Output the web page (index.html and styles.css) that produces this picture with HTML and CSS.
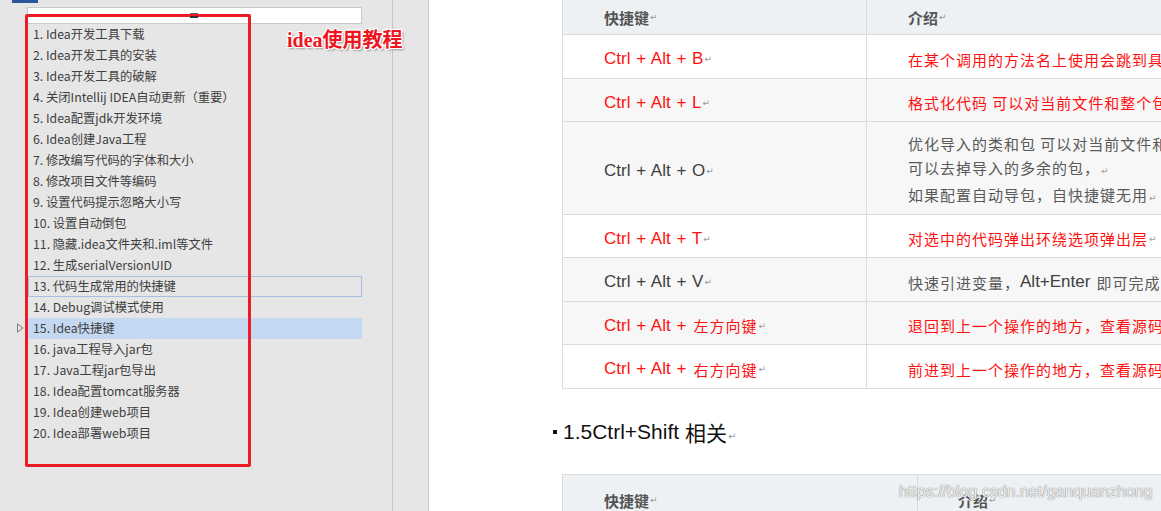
FILE: index.html
```html
<!DOCTYPE html>
<html lang="zh-CN">
<head>
<meta charset="utf-8">
<title>Idea快捷键</title>
<link rel="stylesheet" href="styles.css">
</head>
<body>
<div class="app">
  <aside class="nav">
    <div class="ribbon-tab"></div>
    <div class="search">
      <svg class="grip" width="8" height="6" viewBox="0 0 8 6"><rect x="0" y="0" width="8" height="1" fill="#666"/><rect x="0" y="3" width="8" height="2" fill="#333"/></svg>
    </div>
    <ul class="outline">
      <li>1. Idea开发工具下载</li>
      <li>2. Idea开发工具的安装</li>
      <li>3. Idea开发工具的破解</li>
      <li>4. 关闭Intellij IDEA自动更新（重要）</li>
      <li>5. Idea配置jdk开发环境</li>
      <li>6. Idea创建Java工程</li>
      <li>7. 修改编写代码的字体和大小</li>
      <li>8. 修改项目文件等编码</li>
      <li>9. 设置代码提示忽略大小写</li>
      <li>10. 设置自动倒包</li>
      <li>11. 隐藏.idea文件夹和.iml等文件</li>
      <li>12. 生成serialVersionUID</li>
      <li class="hover">13. 代码生成常用的快捷键</li>
      <li>14. Debug调试模式使用</li>
      <li class="current"><svg class="caret" width="7" height="10" viewBox="0 0 7 10"><path d="M0.5 0.8 L6 5 L0.5 9.2 Z" fill="none" stroke="#777" stroke-width="1"/></svg>15. Idea快捷键</li>
      <li>16. java工程导入jar包</li>
      <li>17. Java工程jar包导出</li>
      <li>18. Idea配置tomcat服务器</li>
      <li>19. Idea创建web项目</li>
      <li>20. Idea部署web项目</li>
    </ul>
    <div class="annot-box"></div>
    <div class="annot-label">idea使用教程</div>
  </aside>
  <div class="gutter"></div>
  <main class="doc">
    <div class="sheet">
      <div class="table t1">
        <div class="row head">
          <div class="cell k">快捷键<span class="ret">↵</span></div>
          <div class="cell d">介绍<span class="ret">↵</span></div>
        </div>
        <div class="row r44 red">
          <div class="cell k">Ctrl + Alt + B<span class="ret">↵</span></div>
          <div class="cell d">在某个调用的方法名上使用会跳到具体的实现处，可以跳过接口</div>
        </div>
        <div class="row r43 grey red">
          <div class="cell k">Ctrl + Alt + L<span class="ret">↵</span></div>
          <div class="cell d">格式化代码 可以对当前文件和整个包目录使用</div>
        </div>
        <div class="row tall grey">
          <div class="cell k">Ctrl + Alt + O<span class="ret">↵</span></div>
          <div class="cell d multi">
            <span>优化导入的类和包 可以对当前文件和整个包目录使用</span>
            <span>可以去掉导入的多余的包，<span class="ret">↵</span></span>
            <span>如果配置自动导包，自快捷键无用<span class="ret">↵</span></span>
          </div>
        </div>
        <div class="row r43 red">
          <div class="cell k">Ctrl + Alt + T<span class="ret">↵</span></div>
          <div class="cell d">对选中的代码弹出环绕选项弹出层<span class="ret">↵</span></div>
        </div>
        <div class="row r44 grey">
          <div class="cell k">Ctrl + Alt + V<span class="ret">↵</span></div>
          <div class="cell d">快速引进变量，<span class="latin">Alt+Enter</span>即可完成，</div>
        </div>
        <div class="row r43 grey red">
          <div class="cell k">Ctrl + Alt +<span class="cjk">左方向键</span><span class="ret">↵</span></div>
          <div class="cell d">退回到上一个操作的地方，查看源码的时候很方便</div>
        </div>
        <div class="row r44 red">
          <div class="cell k">Ctrl + Alt +<span class="cjk">右方向键</span><span class="ret">↵</span></div>
          <div class="cell d">前进到上一个操作的地方，查看源码的时候很方便</div>
        </div>
      </div>

      <h2 class="section"><span class="bullet"></span>1.5Ctrl+Shift <span class="cjk-h">相关</span><span class="ret">↵</span></h2>

      <div class="table t2">
        <div class="row head2">
          <div class="cell k">快捷键<span class="ret">↵</span></div>
          <div class="cell d">介绍<span class="ret">↵</span></div>
        </div>
      </div>
    </div>
    <div class="watermark">https://blog.csdn.net/ganquanzhong</div>
  </main>
</div>
</body>
</html>
```

FILE: styles.css
```css
* { box-sizing: border-box; }
html, body { margin: 0; padding: 0; }
body {
  width: 1161px;
  height: 511px;
  overflow: hidden;
  font-family: "Noto Sans CJK SC", "Liberation Sans", sans-serif;
}
.app {
  display: flex;
  height: 511px;
}

/* ---------- navigation pane ---------- */
.nav {
  position: relative;
  width: 393px;
  flex: none;
  background: #e6e6e6;
  border-right: 1px solid #c6c6c6;
}
.ribbon-tab {
  width: 26px;
  height: 3px;
  margin-left: 12px;
  background: #2b579a;
}
.search {
  margin: 4px 0 0 27px;
  width: 335px;
  height: 17px;
  background: #fff;
  border: 1px solid #c8c8c8;
  display: flex;
  justify-content: center;
  align-items: flex-start;
  padding-top: 5px;
}
.grip {
  display: block;
  margin-left: -2px;
  position: relative;
  z-index: 2;
}
.outline {
  list-style: none;
  margin: 0 0 0 28px;
  padding: 0;
  width: 334px;
}
.outline li {
  position: relative;
  height: 21px;
  line-height: 21px;
  padding-left: 5px;
  font-size: 12.3px;
  color: #404040;
  white-space: nowrap;
}
.outline li.hover {
  border: 1px solid #a7c0e2;
  padding-left: 4px;
  line-height: 19px;
}
.outline li.current { background: #c5d8f2; }
.caret {
  position: absolute;
  left: -11px;
  top: 5px;
}
.annot-box {
  position: absolute;
  z-index: 1;
  left: 25px;
  top: 14px;
  width: 226px;
  height: 453px;
  border: 3px solid #ec1c24;
  border-radius: 2px;
}
.annot-label {
  position: absolute;
  left: 287px;
  top: 27px;
  white-space: nowrap;
  font-family: "Liberation Serif", "Noto Sans CJK SC", serif;
  font-weight: bold;
  font-size: 20px;
  line-height: 26px;
  color: #f0141e;
  text-shadow: 1px 0 0 #fff, -1px 0 0 #fff, 0 1px 0 #fff, 0 -1px 0 #fff,
               1px 1px 0 #fff, -1px -1px 0 #fff, 1px -1px 0 #fff, -1px 1px 0 #fff,
               2px 2px 2px rgba(0,0,0,0.35);
}

/* ---------- gutter ---------- */
.gutter {
  width: 36px;
  flex: none;
  background: #e6e6e6;
  border-right: 1px solid #c6c6c6;
}

/* ---------- document ---------- */
.doc {
  position: relative;
  flex: 1;
  background: #fff;
  overflow: hidden;
}
.sheet {
  padding-left: 133px;
  width: 1400px;
}
.table {
  width: 1000px;
  border-left: 1px solid #dcdcdc;
}
.t2 { border-top: 1px solid #dcdcdc; }
.row {
  display: grid;
  grid-template-columns: 303px 1fr;
  border-bottom: 1px solid #dcdcdc;
  background: #fff;
}
.t2 .row { grid-template-columns: 354px 1fr; }
.row.head, .row.head2 { background: #eef1f4; }
.row.head { height: 35px; }
.row.head2 { height: 47px; }
.row.r44 { height: 44px; }
.row.r43 { height: 43px; }
.row.tall { height: 93px; }
.row.grey { background: #f7f7f7; }

.cell {
  display: flex;
  align-items: center;
  white-space: nowrap;
  overflow: hidden;
}
.cell.d { border-left: 1px solid #dcdcdc; }
.cell.k {
  padding-left: 41px;
  font-family: "Liberation Sans", "Noto Sans CJK SC", sans-serif;
  font-size: 17px;
  color: #404040;
  word-spacing: 1px;
}
.cell.d {
  padding-left: 41px;
  font-size: 15px;
  letter-spacing: 1px;
  color: #595959;
}
.row:not(.head):not(.head2) .cell { padding-top: 5px; }
.t2 .cell.d { padding-left: 40px; }

.head .cell, .head2 .cell {
  font-family: "Noto Sans CJK SC", sans-serif;
  font-weight: bold;
  font-size: 15px;
  color: #555;
  letter-spacing: 0;
  word-spacing: 0;
}
.head2 .cell { padding-top: 4px; }

.row.red .cell.k, .row.red .cell.d { color: #ff1010; }

.cell.multi {
  flex-direction: column;
  align-items: flex-start;
  justify-content: center;
  line-height: 24px;
}
.cjk {
  font-family: "Noto Sans CJK SC", sans-serif;
  font-size: 15px;
  letter-spacing: 1px;
  margin-left: 7px;
}
.latin {
  font-family: "Liberation Sans", sans-serif;
  font-size: 17px;
  letter-spacing: 0;
  color: #404040;
  margin-right: 6px;
}
.ret {
  font-family: "DejaVu Sans", sans-serif;
  font-size: 9px;
  font-weight: normal;
  color: #999;
  letter-spacing: 0;
  margin-left: 1px;
  align-self: center;
}
.cell.multi .ret { align-self: auto; }

.section {
  display: flex;
  align-items: center;
  height: 85px;
  margin: 0 0 0 -9px;
  font-family: "Liberation Sans", sans-serif;
  font-weight: normal;
  font-size: 21px;
  color: #111;
  white-space: pre;
}
.bullet {
  width: 4px;
  height: 4px;
  background: #111;
  margin-right: 6px;
}
.cjk-h {
  font-family: "Noto Sans CJK SC", sans-serif;
  font-size: 21px;
}
.section .ret { font-size: 10px; margin-top: 10px; }

.watermark {
  position: absolute;
  left: 470px;
  top: 483px;
  font-family: "Liberation Sans", sans-serif;
  font-size: 16px;
  color: rgba(255,255,255,0.85);
  text-shadow: 0 0 1px #8a8a8a, 0 0 1px #8a8a8a;
  white-space: nowrap;
}
```
